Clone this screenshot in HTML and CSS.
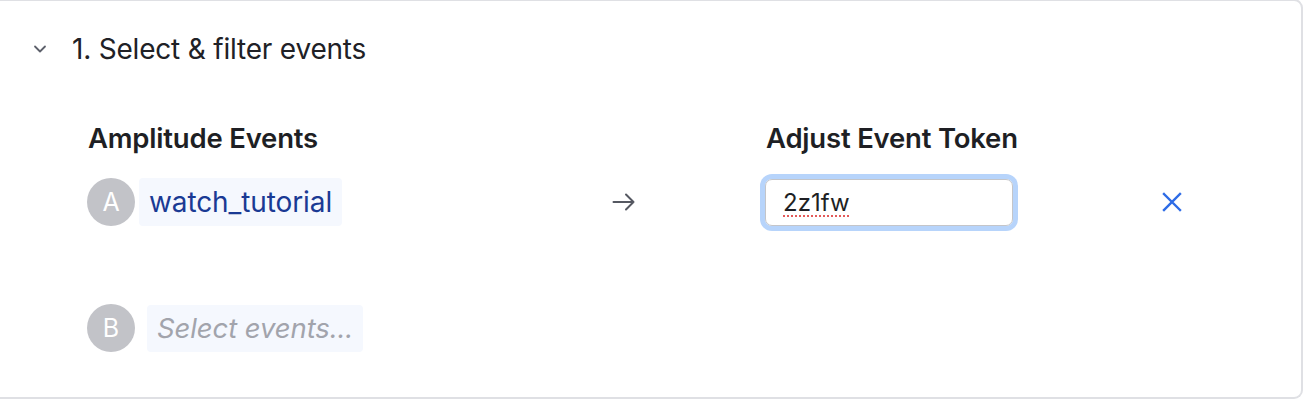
FILE: index.html
```html
<!DOCTYPE html>
<html>
<head>
<meta charset="utf-8">
<link rel="stylesheet" href="styles.css">
</head>
<body>
<div class="card">
  <div class="header">
    <svg class="chevron" width="14" height="14" viewBox="0 0 14 14"><path d="M2 4.5 L7 9.5 L12 4.5" fill="none" stroke="#5d606b" stroke-width="1.8" stroke-linecap="round" stroke-linejoin="round"/></svg>
    <span class="title">1. Select &amp; filter events</span>
  </div>
  <div class="body">
    <div class="grid">
      <div class="heading">Amplitude Events</div>
      <div></div>
      <div class="heading">Adjust Event Token</div>
      <div></div>

      <div class="event">
        <span class="avatar">A</span>
        <span class="chip">watch_tutorial</span>
      </div>
      <div class="arrow-cell">
        <svg width="26" height="26" viewBox="0 0 26 26"><path d="M2.5 13 H22.5 M15 5.5 L22.5 13 L15 20.5" fill="none" stroke="#555861" stroke-width="2" stroke-linecap="round" stroke-linejoin="round"/></svg>
      </div>
      <div class="token-cell">
        <div class="input"><span class="misspelled">2z1fw</span></div>
      </div>
      <div class="close-cell">
        <svg width="22" height="22" viewBox="0 0 22 22"><path d="M3 3 L19 19 M19 3 L3 19" fill="none" stroke="#2d6be6" stroke-width="2.4" stroke-linecap="square"/></svg>
      </div>
    </div>
    <div class="event event-b">
      <span class="avatar">B</span>
      <span class="chip placeholder">Select events...</span>
    </div>
  </div>
</div>
</body>
</html>
```
FILE: styles.css
```css
html, body {
  margin: 0;
  padding: 0;
  background: #ffffff;
}
body {
  font-family: Inter, "Noto Sans", sans-serif;
  color: #1e1f24;
  width: 1308px;
  height: 402px;
  overflow: hidden;
}
.card {
  box-sizing: border-box;
  width: 1303px;
  height: 400px;
  border: 2px solid #dfe0e4;
  border-left: none;
  border-radius: 0 9px 9px 0;
  margin-top: -1px;
}
.header {
  display: flex;
  align-items: center;
  height: 32px;
  padding: 32px 0 0 33px;
}
.chevron {
  display: block;
  margin-right: 25px;
}
.title {
  font-size: 28px;
  line-height: 32px;
  letter-spacing: -0.2px;
  color: #202126;
}
.body {
  padding: 57px 0 0 87px;
}
.grid {
  display: grid;
  grid-template-columns: 524px 154px 398px 24px;
  row-gap: 24px;
  align-items: center;
}
.heading {
  font-size: 27.5px;
  font-weight: 600;
  line-height: 32px;
  padding-left: 1px;
  letter-spacing: -0.2px;
}
.event {
  display: flex;
  align-items: center;
  gap: 4px;
}
.avatar {
  width: 48px;
  height: 48px;
  border-radius: 50%;
  background: #c2c3c8;
  color: #ffffff;
  font-size: 25px;
  display: flex;
  align-items: center;
  justify-content: center;
}
.chip {
  height: 48px;
  display: flex;
  align-items: center;
  padding: 0 10px;
  background: #f5f8fe;
  border-radius: 4px;
  color: #1a3a94;
  font-size: 28px;
  letter-spacing: -0.1px;
}
.placeholder {
  color: #a2a4ac;
  font-style: italic;
  height: 47px;
  font-size: 27.5px;
}
.event-b {
  margin-top: 78px;
  gap: 12px;
}
.arrow-cell svg, .close-cell svg {
  display: block;
}
.close-cell svg {
  margin-left: -2px;
}
.input {
  box-sizing: border-box;
  width: 248px;
  height: 47px;
  border: 1.5px solid #c4c5c9;
  border-radius: 7px;
  box-shadow: 0 0 0 5px #b7d4fb;
  display: flex;
  align-items: center;
  padding-left: 17px;
  font-size: 24px;
  color: #1e1f24;
}
.misspelled {
  text-decoration: underline dotted #e35a5a;
  text-decoration-thickness: 2px;
  text-underline-offset: 5px;
}
```
